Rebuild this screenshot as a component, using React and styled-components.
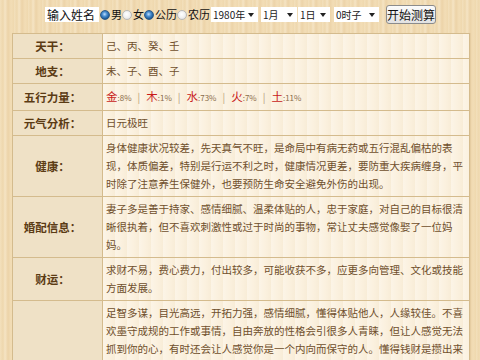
import React from "react";
import styled, { createGlobalStyle } from "styled-components";

const Global = createGlobalStyle`
  html, body { margin: 0; padding: 0; }
  body {
    width: 480px;
    height: 360px;
    overflow: hidden;
    font-family: "Noto Sans CJK SC", "Noto Sans", sans-serif;
    background-color: #efd9b0;
    background-image: repeating-linear-gradient(90deg,
      #f3e0bc 0px, #eed7ad 3px, #f5e4c4 5px, #ecd3a8 8px, #f2ddb6 11px, #efd8ae 14px);
  }
`;

const Page = styled.div`
  display: flex;
  flex-direction: column;
`;

const Form = styled.form`
  display: flex;
  align-items: center;
  justify-content: center;
  height: 19px;
  margin-top: 5px;
  padding-left: 1px;
  font-size: 11px;
  color: #111;
`;

const NameInput = styled.input`
  width: 54px;
  height: 15px;
  box-sizing: border-box;
  border: none;
  padding: 0 2px;
  margin-right: 1px;
  font: 12px "Noto Sans CJK SC", sans-serif;
  color: #111;
  background: #fff;
  outline: none;
`;

const RadioLabel = styled.label`
  display: flex;
  align-items: center;
  line-height: 15px;
  white-space: nowrap;
`;

const Dot = styled.span`
  display: inline-block;
  box-sizing: border-box;
  width: 10px;
  height: 10px;
  border-radius: 50%;
  margin: 0 1px 0 0;
  border: 1px solid ${(p) => (p.$on ? "#2f5b86" : "#b9b9b9")};
  background: ${(p) =>
    p.$on
      ? "radial-gradient(circle at 45% 40%, #bfe0ff 0, #4b8fd0 35%, #1e5b98 70%, #173f6a 100%)"
      : "radial-gradient(circle at 45% 40%, #ffffff 0, #f0f0f0 50%, #d6d6d6 100%)"};
`;

const SelectWrap = styled.span`
  display: inline-flex;
  align-items: center;
  height: 15px;
  margin-left: ${(p) => p.$ml}px;
  background: #fff;
  padding: 0 4px 0 2px;
  width: ${(p) => p.$w}px;
  box-sizing: border-box;
  justify-content: space-between;
`;

const SelectText = styled.span`
  font-size: 10px;
  line-height: 15px;
  color: #222;
`;

const Caret = styled.span`
  width: 0;
  height: 0;
  border-left: 3.5px solid transparent;
  border-right: 3.5px solid transparent;
  border-top: 4px solid #222;
`;

const Button = styled.button`
  margin-left: 7px;
  height: 19px;
  width: 50px;
  padding: 0;
  border: 1px solid #8c8c8c;
  border-radius: 3px;
  background: linear-gradient(#fbfbfb, #e2e2e2);
  font: 12px "Noto Sans CJK SC", sans-serif;
  color: #111;
  line-height: 16px;
`;

const Table = styled.div`
  margin: 9px 0 0 12px;
  width: 458px;
  box-sizing: border-box;
  border: 1px solid #d4bb8d;
  border-bottom: none;
  box-shadow: 1px 0 0 #e6cda2;
  display: grid;
  grid-template-columns: 90px 1fr;
`;

const Label = styled.div`
  display: flex;
  align-items: center;
  justify-content: center;
  padding-right: 10px;
  min-height: 24px;
  border-bottom: 1px solid #d4bb8d;
  border-right: 1px solid #d4bb8d;
  background: #efe1c6;
  font-size: 11.5px;
  font-weight: 700;
  color: #5b3b14;
  white-space: nowrap;
`;

const Content = styled.div`
  display: flex;
  align-items: center;
  flex-wrap: wrap;
  padding: 3px 4px 3px 3px;
  min-height: 18px;
  border-bottom: 1px solid #d4bb8d;
  background-color: #fbf1df;
  background-image: repeating-linear-gradient(90deg,
    rgba(255,255,255,0.25) 0px, rgba(255,255,255,0) 6px, rgba(230,210,170,0.15) 12px);
  font-size: 10.5px;
  line-height: 18px;
  color: #6f4f2c;
`;

const Para = styled.p`
  margin: 0;
  width: 100%;
`;

const Elem = styled.span`
  display: inline-flex;
  align-items: baseline;
`;

const ElemName = styled.span`
  font-size: 11.5px;
  color: #c81a1a;
`;

const ElemVal = styled.span`
  font-size: 8px;
  color: #8a6c4a;
`;

const Sep = styled.span`
  color: #b49a78;
  font-size: 10px;
  margin: 0 6px 0 6px;
`;

const elements = [
  ["金", "8%"],
  ["木", "1%"],
  ["水", "73%"],
  ["火", "7%"],
  ["土", "11%"],
];

function Radio({ on, children }) {
  return (
    <RadioLabel>
      <Dot $on={on} />
      {children}
    </RadioLabel>
  );
}

function Select({ w, ml, children }) {
  return (
    <SelectWrap $w={w} $ml={ml}>
      <SelectText>{children}</SelectText>
      <Caret />
    </SelectWrap>
  );
}

export default function App() {
  return (
    <Page>
      <Global />
      <Form onSubmit={(e) => e.preventDefault()}>
        <NameInput defaultValue="输入姓名" />
        <Radio on>男</Radio>
        <Radio>女</Radio>
        <Radio on>公历</Radio>
        <Radio>农历</Radio>
        <Select w={47} ml={1}>1980年</Select>
        <Select w={36} ml={3}>1月</Select>
        <Select w={32} ml={1}>1日</Select>
        <Select w={45} ml={4}>0时子</Select>
        <Button type="submit">开始测算</Button>
      </Form>
      <Table>
        <Label>天干：</Label>
        <Content>己、丙、癸、壬</Content>
        <Label>地支：</Label>
        <Content>未、子、酉、子</Content>
        <Label>五行力量：</Label>
        <Content>
          {elements.map(([n, v], i) => (
            <Elem key={n}>
              <ElemName>{n}</ElemName>
              <ElemVal>:{v}</ElemVal>
              {i < elements.length - 1 && <Sep>|</Sep>}
            </Elem>
          ))}
        </Content>
        <Label>元气分析：</Label>
        <Content>日元极旺</Content>
        <Label>健康：</Label>
        <Content>
          <Para>
            身体健康状况较差，先天真气不旺，是命局中有病无药或五行混乱偏枯的表现，体质偏差，特别是行运不利之时，健康情况更差，要防重大疾病缠身，平时除了注意养生保健外，也要预防生命安全避免外伤的出现。
          </Para>
        </Content>
        <Label>婚配信息：</Label>
        <Content>
          <Para>
            妻子多是善于持家、感情细腻、温柔体贴的人，忠于家庭，对自己的目标很清晰很执着，但不喜欢刺激性或过于时尚的事物，常让丈夫感觉像娶了一位妈妈。
          </Para>
        </Content>
        <Label>财运：</Label>
        <Content>
          <Para>
            求财不易，费心费力，付出较多，可能收获不多，应更多向管理、文化或技能方面发展。
          </Para>
        </Content>
        <Label>性格分析：</Label>
        <Content>
          <Para>
            足智多谋，目光高远，开拓力强，感情细腻，懂得体贴他人，人缘较佳。不喜欢墨守成规的工作或事情，自由奔放的性格会引很多人青睐，但让人感觉无法抓到你的心，有时还会让人感觉你是一个内向而保守的人。懂得钱财是攒出来的，不会随意挥霍，对金钱有较强的规划能力，但有时过于谨慎，容易错失良机。做事认真负责，注重细节，对待工作一丝不苟，深得上司和同事的信任。为人真诚，重情重义，朋友遇到困难时总能伸出援手，因此在社交圈中口碑极好。思维敏捷，善于分析问题，能够从复杂的局面中找到解决之道，适合从事需要策划与统筹的工作。性格中带有几分理想主义，对生活品质有一定的追求，喜欢安静的环境，闲暇时爱读书、旅行，借此开阔眼界、陶冶情操。遇事冷静沉着，不轻易表露情绪，但内心情感丰富，对家人和朋友十分关怀。
          </Para>
        </Content>
      </Table>
    </Page>
  );
}
